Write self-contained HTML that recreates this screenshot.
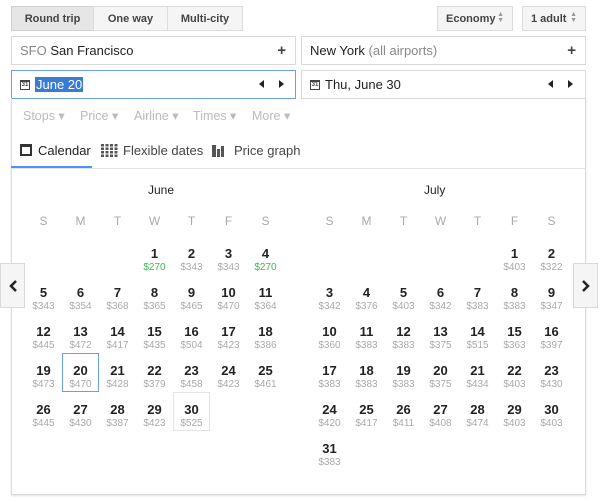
<!DOCTYPE html>
<html><head><meta charset="utf-8"><style>
*{box-sizing:border-box;margin:0;padding:0}
body{width:600px;height:502px;background:#fff;font-family:"Liberation Sans",Arial,sans-serif;position:relative;overflow:hidden;color:#222}
.a{position:absolute}
.btn{position:absolute;top:6px;height:25px;border:1px solid #dcdcdc;background:#f5f5f5;font-size:11px;font-weight:bold;color:#444;display:flex;align-items:center;justify-content:center}
.inp{position:absolute;height:29px;border:1px solid #d9d9d9;background:#fff;font-size:13px;display:flex;align-items:center;padding-left:8px}
.plus{position:absolute;right:9px;top:5px;font-size:15px;color:#444;font-weight:bold}
.arr{position:absolute;top:9px;width:0;height:0;border-top:4px solid transparent;border-bottom:4px solid transparent}
.cal{display:inline-block;width:10px;height:10px;border:1px solid #444;border-top-width:2px;font-size:6px;line-height:7px;text-align:center;font-weight:bold;margin-right:5px;color:#444}
.grid{position:absolute;top:236px;display:grid;grid-template-columns:repeat(7,37px);grid-auto-rows:39px}
.grid div{text-align:center;position:relative}
.grid b{display:block;font-size:13px;margin-top:11px;line-height:14px;color:#222}
.grid i{display:block;font-style:normal;font-size:10px;color:#aaa;line-height:11px;margin-top:1px}
.grid i.g{color:#3cba54}
.wk{position:absolute;top:214px;display:grid;grid-template-columns:repeat(7,37px);font-size:12px;color:#aaa;text-align:center}
.nav{position:absolute;top:263px;width:25px;height:45px;border:1px solid #d9d9d9;background:#f5f5f5;font-size:18px;font-weight:bold;display:flex;align-items:center;justify-content:center;color:#222}
.f{position:absolute;top:108px;font-size:12.5px;color:#bbb}
</style></head><body>
<div class="btn" style="left:11px;width:83px;background:#e6e6e6;border-color:#d0d0d0">Round trip</div>
<div class="btn" style="left:93px;width:75px">One way</div>
<div class="btn" style="left:167px;width:76px">Multi-city</div>
<div class="btn" style="left:437px;width:76px;justify-content:flex-start;padding-left:8px">Economy<span class="a" style="right:8px;top:5px;font-size:7px;color:#999;line-height:6px">▲<br>▼</span></div>
<div class="btn" style="left:522px;width:64px;justify-content:flex-start;padding-left:8px">1 adult<span class="a" style="right:8px;top:5px;font-size:7px;color:#999;line-height:6px">▲<br>▼</span></div>

<div class="inp" style="left:11px;top:36px;width:285px"><span style="color:#888">SFO&nbsp;</span>San Francisco<span class="plus">+</span></div>
<div class="inp" style="left:301px;top:36px;width:285px">New York&nbsp;<span style="color:#888">(all airports)</span><span class="plus">+</span></div>
<div class="inp" style="left:11px;top:70px;width:285px;border-color:#6b9ee8"><span class="cal">31</span><span style="background:#3a7bd5;color:#fff;padding:0 1px">June 20</span>
<span class="arr" style="left:247px;border-right:5px solid #222"></span><span class="arr" style="left:267px;border-left:5px solid #222"></span></div>
<div class="inp" style="left:301px;top:70px;width:285px"><span class="cal">31</span>Thu, June 30
<span class="arr" style="left:246px;border-right:5px solid #222"></span><span class="arr" style="left:266px;border-left:5px solid #222"></span></div>

<div class="a" style="left:11px;top:98px;width:575px;height:397px;border:1px solid #dcdcdc;border-top:none;box-shadow:0 1px 2px rgba(0,0,0,.12)"></div>
<div class="f" style="left:23px">Stops ▾</div>
<div class="f" style="left:80px">Price ▾</div>
<div class="f" style="left:134px">Airline ▾</div>
<div class="f" style="left:193px">Times ▾</div>
<div class="f" style="left:252px">More ▾</div>

<div class="a" style="left:20px;top:144px;width:12px;height:12px;border:2px solid #333;border-top-width:3px"></div>
<div class="a" style="left:38px;top:143px;font-size:13px;color:#222">Calendar</div>
<div class="a" style="left:101px;top:144px;width:17px;height:13px;background:repeating-linear-gradient(90deg,#555 0 3px,transparent 3px 4.5px),#fff;-webkit-mask:repeating-linear-gradient(0deg,#000 0 2.5px,transparent 2.5px 3.5px)"></div>
<div class="a" style="left:123px;top:143px;font-size:13px;color:#444">Flexible dates</div>
<div class="a" style="left:212px;top:145px;width:4px;height:12px;background:#555"></div>
<div class="a" style="left:217px;top:149px;width:3px;height:8px;background:#555"></div>
<div class="a" style="left:221px;top:146px;width:3px;height:11px;background:#555"></div>
<div class="a" style="left:234px;top:143px;font-size:13px;color:#444">Price graph</div>
<div class="a" style="left:11px;top:168px;width:575px;height:1px;background:#e2e2e2"></div>
<div class="a" style="left:11px;top:166px;width:81px;height:2px;background:#4d90fe"></div>

<div class="a" style="left:148px;top:183px;font-size:12px">June</div>
<div class="a" style="left:424px;top:183px;font-size:12px">July</div>
<div class="wk" style="left:25px"><span>S</span><span>M</span><span>T</span><span>W</span><span>T</span><span>F</span><span>S</span></div>
<div class="wk" style="left:311px"><span>S</span><span>M</span><span>T</span><span>W</span><span>T</span><span>F</span><span>S</span></div>

<div class="grid" style="left:25px">
<div></div><div></div><div></div>
<div><b>1</b><i class="g">$270</i></div><div><b>2</b><i>$343</i></div><div><b>3</b><i>$343</i></div><div><b>4</b><i class="g">$270</i></div>
<div><b>5</b><i>$343</i></div><div><b>6</b><i>$354</i></div><div><b>7</b><i>$368</i></div><div><b>8</b><i>$365</i></div><div><b>9</b><i>$465</i></div><div><b>10</b><i>$470</i></div><div><b>11</b><i>$364</i></div>
<div><b>12</b><i>$445</i></div><div><b>13</b><i>$472</i></div><div><b>14</b><i>$417</i></div><div><b>15</b><i>$435</i></div><div><b>16</b><i>$504</i></div><div><b>17</b><i>$423</i></div><div><b>18</b><i>$386</i></div>
<div><b>19</b><i>$473</i></div><div style="border:1px solid #6b9ee8"><b style="margin-top:10px">20</b><i>$470</i></div><div><b>21</b><i>$428</i></div><div><b>22</b><i>$379</i></div><div><b>23</b><i>$458</i></div><div><b>24</b><i>$423</i></div><div><b>25</b><i>$461</i></div>
<div><b>26</b><i>$445</i></div><div><b>27</b><i>$430</i></div><div><b>28</b><i>$387</i></div><div><b>29</b><i>$423</i></div><div style="border:1px solid #e4e4e4"><b style="margin-top:10px">30</b><i>$525</i></div>
</div>

<div class="grid" style="left:311px">
<div></div><div></div><div></div><div></div><div></div>
<div><b>1</b><i>$403</i></div><div><b>2</b><i>$322</i></div>
<div><b>3</b><i>$342</i></div><div><b>4</b><i>$376</i></div><div><b>5</b><i>$403</i></div><div><b>6</b><i>$342</i></div><div><b>7</b><i>$383</i></div><div><b>8</b><i>$383</i></div><div><b>9</b><i>$347</i></div>
<div><b>10</b><i>$360</i></div><div><b>11</b><i>$383</i></div><div><b>12</b><i>$383</i></div><div><b>13</b><i>$375</i></div><div><b>14</b><i>$515</i></div><div><b>15</b><i>$363</i></div><div><b>16</b><i>$397</i></div>
<div><b>17</b><i>$383</i></div><div><b>18</b><i>$383</i></div><div><b>19</b><i>$383</i></div><div><b>20</b><i>$375</i></div><div><b>21</b><i>$434</i></div><div><b>22</b><i>$403</i></div><div><b>23</b><i>$430</i></div>
<div><b>24</b><i>$420</i></div><div><b>25</b><i>$417</i></div><div><b>26</b><i>$411</i></div><div><b>27</b><i>$408</i></div><div><b>28</b><i>$474</i></div><div><b>29</b><i>$403</i></div><div><b>30</b><i>$403</i></div>
<div><b>31</b><i>$383</i></div>
</div>

<div class="nav" style="left:0">
<svg width="10" height="14" viewBox="0 0 10 14"><path d="M8 2 L3 7 L8 12" stroke="#222" stroke-width="2.5" fill="none"/></svg></div>
<div class="nav" style="left:573px">
<svg width="10" height="14" viewBox="0 0 10 14"><path d="M2 2 L7 7 L2 12" stroke="#222" stroke-width="2.5" fill="none"/></svg></div>
</body></html>
